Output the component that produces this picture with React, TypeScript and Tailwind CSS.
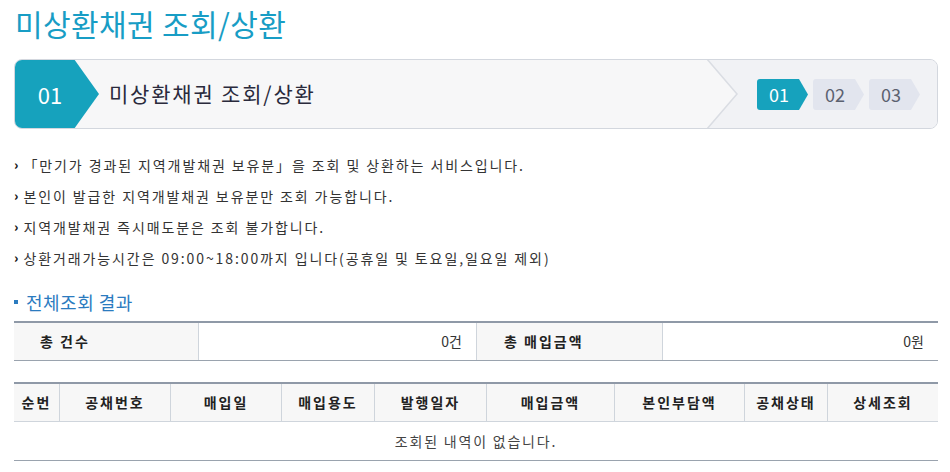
import React from 'react';

const notices = [
    '「만기가 경과된 지역개발채권 보유분」을 조회 및 상환하는 서비스입니다.',
    '본인이 발급한 지역개발채권 보유분만 조회 가능합니다.',
    '지역개발채권 즉시매도분은 조회 불가합니다.',
    '상환거래가능시간은 09:00~18:00까지 입니다(공휴일 및 토요일,일요일 제외)',
];

const columns = [
    { label: '순번', w: 'w-[45px]' },
    { label: '공채번호', w: 'w-[111px]' },
    { label: '매입일', w: 'w-[111px]' },
    { label: '매입용도', w: 'w-[93px]' },
    { label: '발행일자', w: 'w-[112px]' },
    { label: '매입금액', w: 'w-[128px]' },
    { label: '본인부담액', w: 'w-[130px]' },
    { label: '공채상태', w: 'w-[83px]' },
    { label: '상세조회', w: 'flex-1' },
];

const StepBadge: React.FC<{ num: string; active?: boolean }> = ({ num, active }) => (
    <div className="relative w-[51px] h-[31px]">
        <svg className="absolute inset-0" width="51" height="31" viewBox="0 0 51 31">
            <path
                d="M3 0 H42 L51 15.5 L42 31 H3 Q0 31 0 28 V3 Q0 0 3 0 Z"
                fill={active ? '#16a2bd' : '#e2e5ee'}
            />
        </svg>
        <span
            className={`relative flex h-full w-[44px] items-center justify-center text-[18px] ${
                active ? 'text-white' : 'text-[#5b6170]'
            }`}
        >
            {num}
        </span>
    </div>
);

const App: React.FC = () => {
    return (
        <div className="w-[950px] h-[472px] overflow-hidden bg-white pl-[14px] pr-[12px] font-['Noto_Sans_CJK_KR','Noto_Sans',sans-serif] text-[#333]">
            <h1 className="pt-[2px] pl-[1px] text-[30px] leading-[42px] tracking-[0.4px] text-[#189dc5]">미상환채권 조회/상환</h1>

            {/* step box */}
            <div className="mt-[15px] flex h-[70px] overflow-hidden rounded-[8px] border border-[#d3d7de] bg-[#f7f7f8]">
                <div className="relative w-[84px] shrink-0">
                    <svg className="absolute left-[-1px] top-[-1px]" width="86" height="70" viewBox="0 0 86 70">
                        <path d="M0 0 H60 L85 35 L60 70 H0 Z" fill="#16a2bd" />
                    </svg>
                    <span className="relative flex h-full w-[70px] items-center justify-center text-[22px] text-white">01</span>
                </div>
                <div className="flex flex-1 items-center pl-[10px] text-[21px] tracking-[1.8px] text-[#2a2a3c]">미상환채권 조회/상환</div>
                <div className="relative flex w-[230px] items-center pl-[50px]">
                    <svg className="absolute left-0 top-0" width="32" height="68" viewBox="0 0 32 68">
                        <path d="M0 0 L30 34 L0 68 H32 V0 Z" fill="#f1f2f5" />
                        <path d="M0 -1 L30 34 L0 69" fill="none" stroke="#dadde3" strokeWidth="1.5" />
                    </svg>
                    <div className="absolute inset-y-0 left-[31px] right-0 bg-[#f1f2f5]" />
                    <div className="relative flex gap-[5px]">
                        <StepBadge num="01" active />
                        <StepBadge num="02" />
                        <StepBadge num="03" />
                    </div>
                </div>
            </div>

            {/* notices */}
            <ul className="mt-[26px] flex flex-col gap-[11px] text-[14px] leading-[20px] tracking-[1.9px]">
                {notices.map((n) => (
                    <li key={n} className="flex items-center">
                        <span className="mr-[5px] text-[13px] font-black tracking-normal text-[#111]">›</span>
                        <span>{n}</span>
                    </li>
                ))}
            </ul>

            {/* section title */}
            <h2 className="mt-[22px] flex items-center text-[18px] leading-[24px] tracking-[0.5px] text-[#2b7bbf]">
                <span className="mr-[8px] inline-block h-[4px] w-[4px] bg-[#2b7bbf]" />
                전체조회 결과
            </h2>

            {/* summary */}
            <div className="mt-[7px] flex h-[40px] border-t-2 border-b border-t-[#8f99a7] border-b-[#9aa3ae] text-[14px]">
                <div className="flex w-[184px] items-center bg-[#f7f7f7] pl-[26px] font-bold tracking-[2px] text-[#222]">총 건수</div>
                <div className="flex w-[278px] items-center justify-end border-l border-[#cfd5dc] pr-[14px]">0건</div>
                <div className="flex w-[186px] items-center border-l border-[#cfd5dc] bg-[#f7f7f7] pl-[27px] font-bold tracking-[2px] text-[#222]">총 매입금액</div>
                <div className="flex flex-1 items-center justify-end border-l border-[#cfd5dc] pr-[14px]">0원</div>
            </div>

            {/* list */}
            <div className="mt-[21px] border-t-2 border-b border-t-[#8f99a7] border-b-[#9aa3ae] text-[14px]">
                <div className="flex h-[38px] border-b border-[#cfd5dc] bg-[#f7f7f7] font-bold text-[#222]">
                    {columns.map((c, i) => (
                        <div
                            key={c.label}
                            className={`${c.w} flex items-center justify-center tracking-[2px] ${i > 0 ? 'border-l border-[#cfd5dc]' : ''}`}
                        >
                            {c.label}
                        </div>
                    ))}
                </div>
                <div className="flex h-[38px] items-center justify-center text-[14px] tracking-[1.8px] text-[#444]">조회된 내역이 없습니다.</div>
            </div>
        </div>
    );
};

export default App;
